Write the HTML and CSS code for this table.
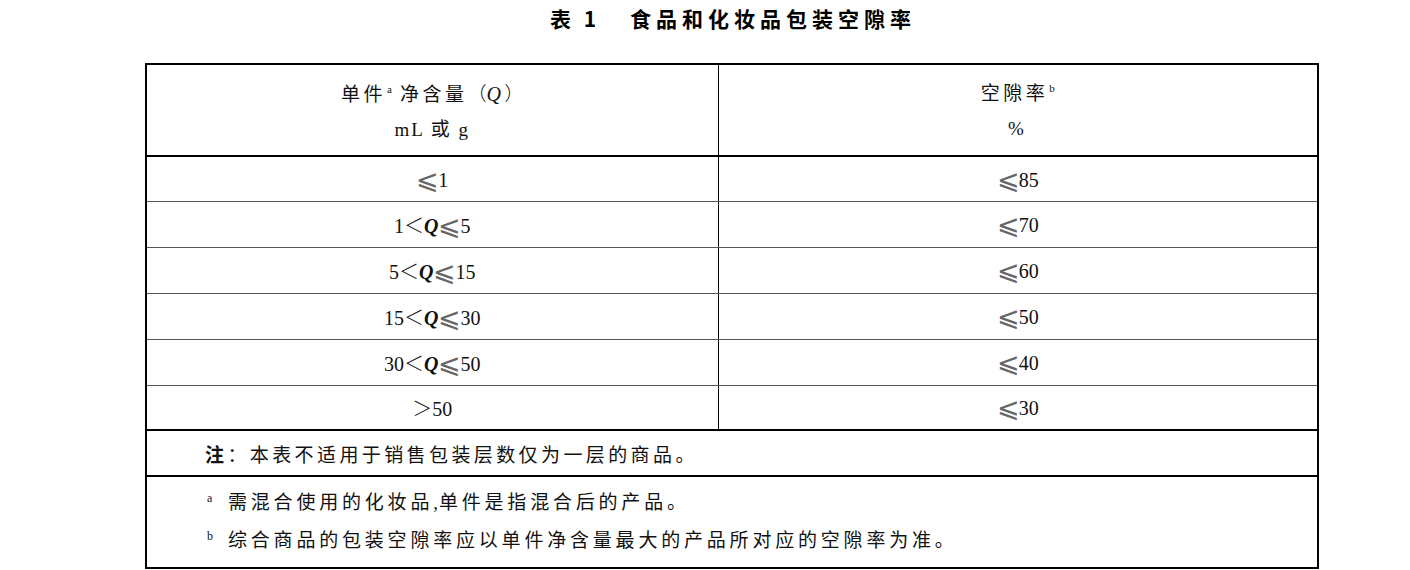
FILE: index.html
```html
<!DOCTYPE html>
<html lang="zh-CN">
<head>
<meta charset="utf-8">
<title>表1 食品和化妆品包装空隙率</title>
<link rel="stylesheet" href="styles.css">
</head>
<body>
<h1 class="caption"><span class="cap-no">表 1</span><span class="cap-text">食品和化妆品包装空隙率</span></h1>
<table class="spec">
  <colgroup><col class="c1"><col class="c2"></colgroup>
  <thead>
    <tr class="head">
      <th><div>单件<sup>a</sup> 净含量<span class="par">（</span><i class="q">Q</i><span class="par">）</span></div><div class="unit">mL 或 g</div></th>
      <th><div>空隙率<sup>b</sup></div><div>%</div></th>
    </tr>
  </thead>
  <tbody>
    <tr class="row first"><td><span class="le">⩽</span>1</td><td><span class="le">⩽</span>85</td></tr>
    <tr class="row"><td>1<span class="lt">＜</span><b class="q">Q</b><span class="le">⩽</span>5</td><td><span class="le">⩽</span>70</td></tr>
    <tr class="row"><td>5<span class="lt">＜</span><b class="q">Q</b><span class="le">⩽</span>15</td><td><span class="le">⩽</span>60</td></tr>
    <tr class="row"><td>15<span class="lt">＜</span><b class="q">Q</b><span class="le">⩽</span>30</td><td><span class="le">⩽</span>50</td></tr>
    <tr class="row"><td>30<span class="lt">＜</span><b class="q">Q</b><span class="le">⩽</span>50</td><td><span class="le">⩽</span>40</td></tr>
    <tr class="row last"><td><span class="lt">＞</span>50</td><td><span class="le">⩽</span>30</td></tr>
    <tr class="note"><td colspan="2"><b>注</b>：本表不适用于销售包装层数仅为一层的商品。</td></tr>
    <tr class="foot"><td colspan="2">
      <div class="fn"><sup>a</sup><span>需混合使用的化妆品<span class="cm">,</span>单件是指混合后的产品。</span></div>
      <div class="fn"><sup>b</sup><span>综合商品的包装空隙率应以单件净含量最大的产品所对应的空隙率为准。</span></div>
    </td></tr>
  </tbody>
</table>
</body>
</html>
```

FILE: styles.css
```css
html, body {
  margin: 0;
  padding: 0;
  background: #fff;
}
body {
  font-family: "Liberation Serif", "Noto Sans CJK SC", serif;
  color: #111;
}
.caption {
  margin: 0;
  height: 63px;
  box-sizing: border-box;
  padding-top: 4px;
  padding-left: 56px;
  line-height: 28px;
  font-size: 21px;
  font-weight: bold;
  font-family: "Noto Sans CJK SC", sans-serif;
  text-align: center;
  color: #000;
}
.cap-no {
  letter-spacing: 4px;
  margin-right: 30px;
}
.cap-text {
  letter-spacing: 5px;
}
.spec {
  margin-left: 145px;
  width: 1172px;
  border-collapse: collapse;
  border: 2px solid #000;
  table-layout: fixed;
  font-size: 19px;
}
.c1 { width: 572px; }
.c2 { width: 600px; }
.spec th, .spec td {
  padding: 0;
  text-align: center;
  font-weight: normal;
  border-left: 1px solid #000;
  border-right: 1px solid #000;
}
.head th {
  height: 89px;
  border-bottom: 2px solid #000;
  line-height: 35px;
  letter-spacing: 3.5px;
  vertical-align: middle;
  padding-top: 1px;
}
.head div { white-space: nowrap; }
.head .unit { letter-spacing: 2px; }
.par { letter-spacing: 0; font-family: "Noto Sans CJK SC", sans-serif; font-weight: 300; }
sup {
  font-size: 11px;
  vertical-align: 8px;
  line-height: 0;
  letter-spacing: 0;
  margin-left: 1px;
}
.q {
  font-style: italic;
  font-weight: bold;
  font-family: "Liberation Serif", serif;
}
.head .q { font-weight: normal; font-size: 20px; }
.row td {
  height: 44px;
  border-bottom: 1px solid #555;
  font-size: 20px;
  padding-top: 1px;
  line-height: 24px;
}
.row.first td { height: 43px; }
.row.last td { height: 42px; border-bottom: 2px solid #000; }
.le {
  font-family: "DejaVu Sans", serif;
  font-weight: 200;
  font-size: 27px;
  line-height: 0;
  vertical-align: -2px;
  display: inline-block;
  margin-right: -1px;
  color: #666;
}
.lt {
  font-family: "Noto Sans CJK SC", sans-serif;
  font-weight: 300;
  font-size: 20px;
}
.note td {
  height: 44px;
  border-bottom: 2px solid #000;
  text-align: left;
  padding-left: 58px;
  letter-spacing: 3.4px;
}
.note b { font-family: "Noto Sans CJK SC", sans-serif; font-weight: bold; }
.foot td {
  height: 90px;
  text-align: left;
  padding-left: 60px;
  vertical-align: middle;
}
.fn {
  display: flex;
  align-items: center;
  line-height: 38px;
  letter-spacing: 3.8px;
}
.fn sup {
  width: 21px;
  text-align: left;
  vertical-align: baseline;
  line-height: 1;
  align-self: flex-start;
  margin-top: 8px;
  margin-left: 0;
  font-size: 12px;
}
.cm { letter-spacing: 0; margin-right: 1px; }
```
